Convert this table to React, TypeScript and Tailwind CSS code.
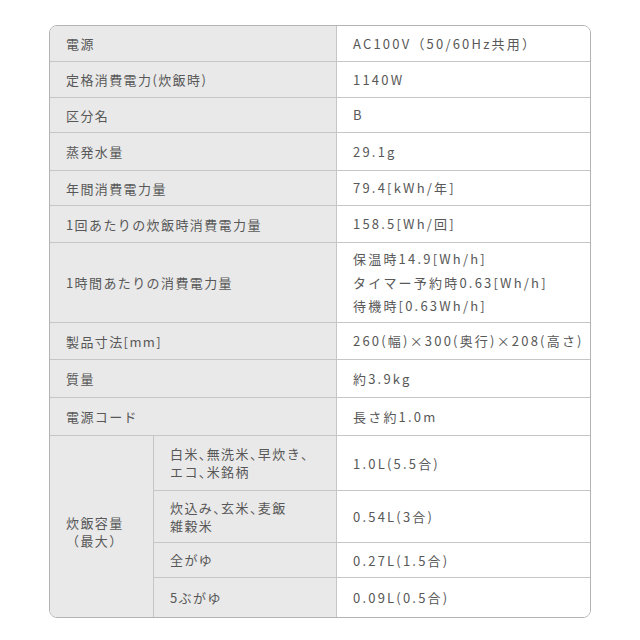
import React from "react";

const top: { label: string; value: string[] }[] = [
  { label: "電源", value: ["AC100V（50/60Hz共用）"] },
  { label: "定格消費電力(炊飯時)", value: ["1140W"] },
  { label: "区分名", value: ["B"] },
  { label: "蒸発水量", value: ["29.1g"] },
  { label: "年間消費電力量", value: ["79.4[kWh/年]"] },
  { label: "1回あたりの炊飯時消費電力量", value: ["158.5[Wh/回]"] },
  {
    label: "1時間あたりの消費電力量",
    value: ["保温時14.9[Wh/h]", "タイマー予約時0.63[Wh/h]", "待機時[0.63Wh/h]"],
  },
  { label: "製品寸法[mm]", value: ["260(幅)×300(奥行)×208(高さ)"] },
  { label: "質量", value: ["約3.9kg"] },
  { label: "電源コード", value: ["長さ約1.0m"] },
];

const sub: { label: string[]; value: string }[] = [
  { label: ["白米、無洗米、早炊き、", "エコ、米銘柄"], value: "1.0L(5.5合)" },
  { label: ["炊込み、玄米、麦飯", "雑穀米"], value: "0.54L(3合)" },
  { label: ["全がゆ"], value: "0.27L(1.5合)" },
  { label: ["5ぶがゆ"], value: "0.09L(0.5合)" },
];

function Jp({ text }: { text: string }) {
  const parts = text.split("、");
  return (
    <>
      {parts.map((p, i) => (
        <React.Fragment key={i}>
          {p}
          {i < parts.length - 1 && (
            <span className="[font-feature-settings:'halt']">、</span>
          )}
        </React.Fragment>
      ))}
    </>
  );
}

export default function App() {
  return (
    <div
      className="w-[640px] h-[640px] bg-white pt-[25px] text-[#585858] text-[13px]"
      style={{ fontFamily: '"Noto Sans CJK JP", "Noto Sans", sans-serif' }}
    >
      <div className="ml-[49px] w-[542px] border border-[#b3b3b3] rounded-[8px] overflow-hidden grid grid-cols-[104px_183px_253px] grid-rows-[36px_36px_35px_38px_35px_37px_80px_37px_38px_38px_55px_52px_35px_39px]">
        {top.map((r, i) => (
          <React.Fragment key={i}>
            <div className="col-span-2 bg-[#e9e9e9] border-b border-r border-[#c6c6c6] flex items-center pl-4 leading-none tracking-[1.4px]">
              {r.label}
            </div>
            <div className="border-b border-[#c6c6c6] flex flex-col justify-center pl-4 leading-[23.5px] bg-white tracking-[2.2px]">
              {r.value.map((v, j) => (
                <div key={j}>{v}</div>
              ))}
            </div>
          </React.Fragment>
        ))}
        <div className="row-span-4 bg-[#e9e9e9] border-r border-[#c6c6c6] flex flex-col justify-center pl-4 pt-[10px] leading-[18px] tracking-[1.4px]">
          <div>炊飯容量</div>
          <div>（最大）</div>
        </div>
        {sub.map((r, i) => (
          <React.Fragment key={i}>
            <div
              className={
                "bg-[#e9e9e9] border-r border-[#c6c6c6] flex flex-col justify-center pl-4 leading-[18px] tracking-[1.4px] " +
                (i < sub.length - 1 ? "border-b" : "")
              }
            >
              {r.label.map((l, j) => (
                <div key={j}>
                  <Jp text={l} />
                </div>
              ))}
            </div>
            <div
              className={
                "border-[#c6c6c6] flex items-center pl-4 leading-none bg-white tracking-[2.2px] " +
                (i < sub.length - 1 ? "border-b" : "")
              }
            >
              {r.value}
            </div>
          </React.Fragment>
        ))}
      </div>
    </div>
  );
}
